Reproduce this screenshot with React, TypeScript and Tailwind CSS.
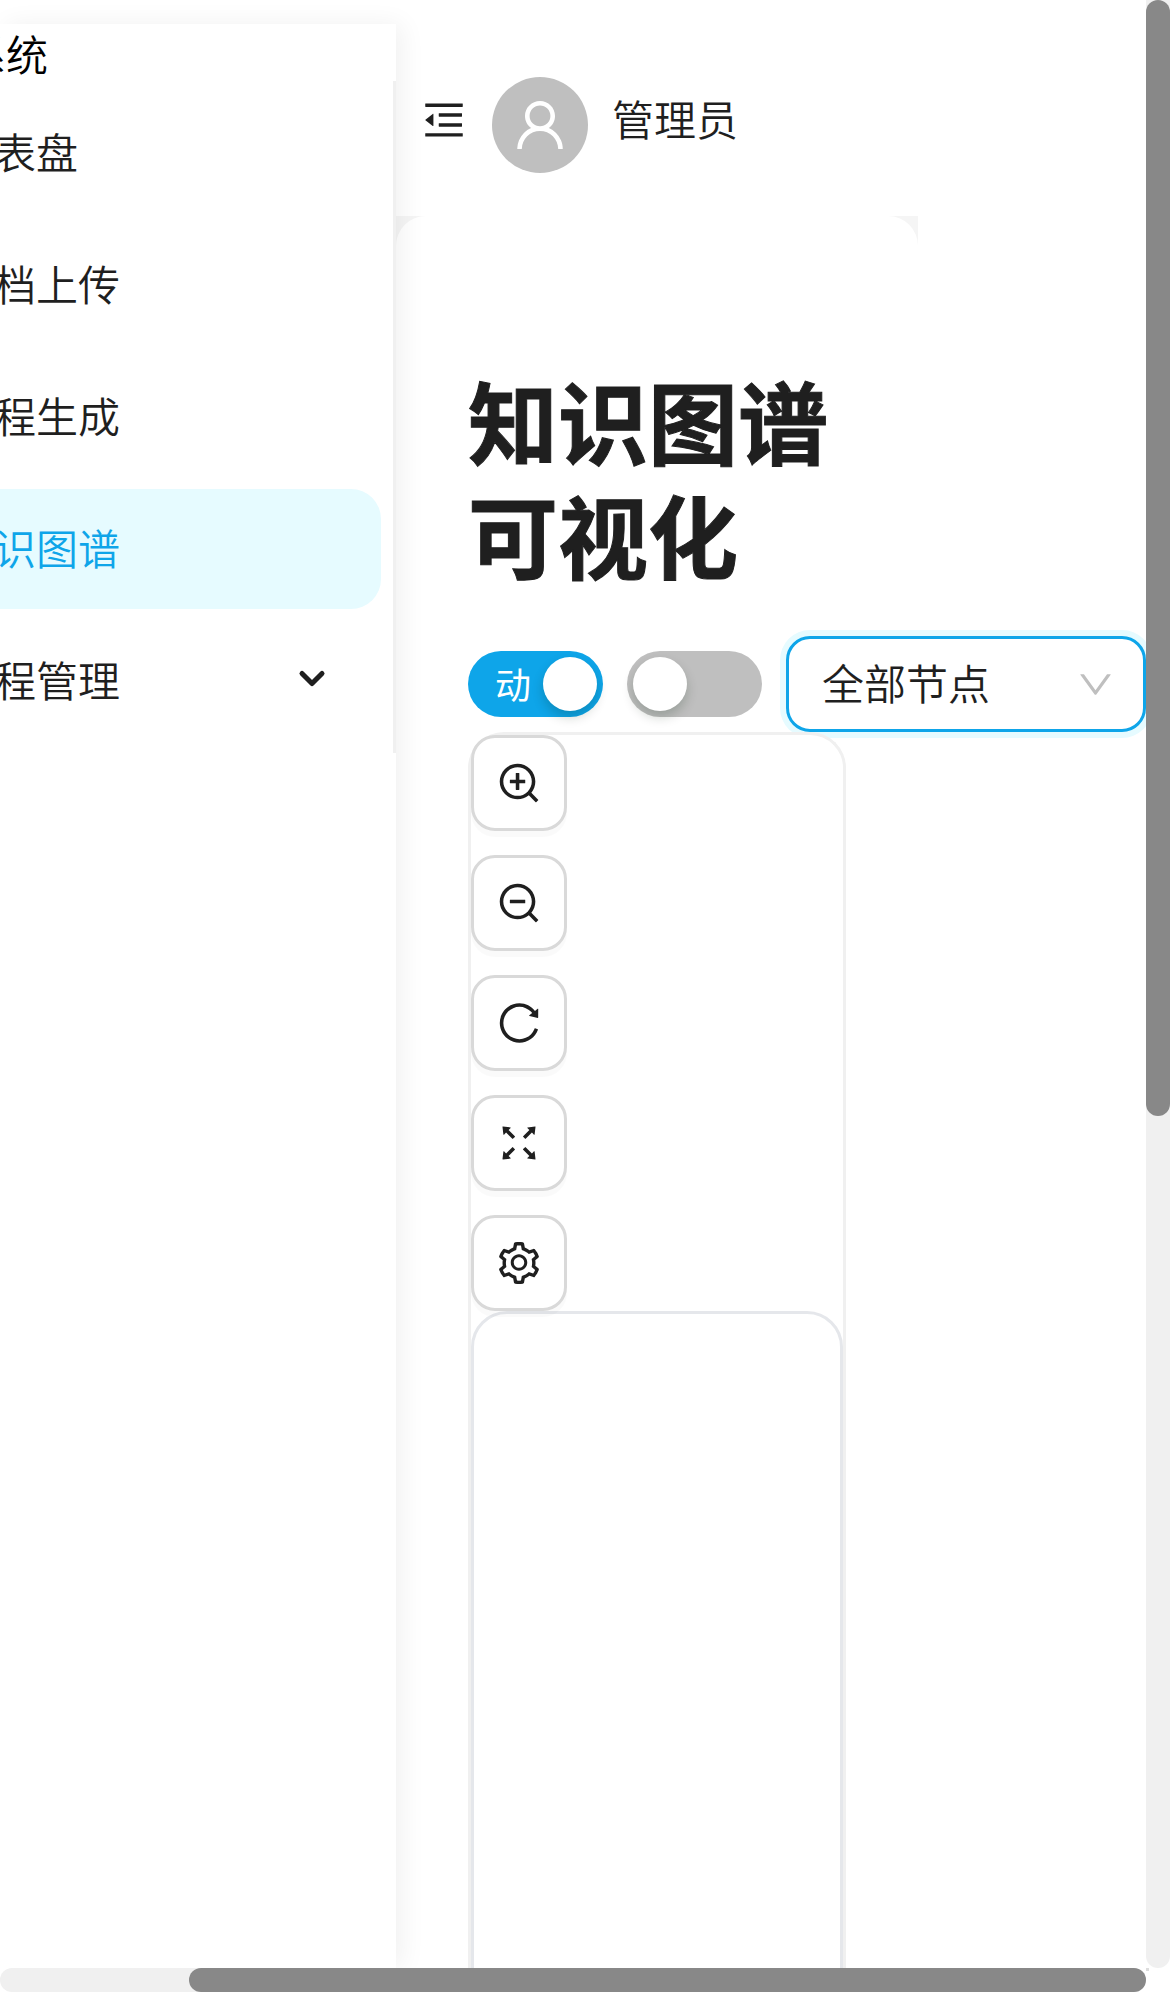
import React from "react";
import {
  AiOutlineMenuFold,
  AiOutlineUser,
  AiOutlineZoomIn,
  AiOutlineZoomOut,
  AiOutlineReload,
  AiOutlineFullscreen,
  AiOutlineSetting,
  AiOutlineDown,
} from "react-icons/ai";

const menu = [
  { label: "仪表盘" },
  { label: "文档上传" },
  { label: "课程生成" },
  { label: "知识图谱", active: true },
  { label: "课程管理", expandable: true },
];

const tools = [
  AiOutlineZoomIn,
  AiOutlineZoomOut,
  AiOutlineReload,
  AiOutlineFullscreen,
  AiOutlineSetting,
];

function Sidebar() {
  return (
    <aside className="relative z-10 mt-6 h-[1944px] w-[396px] shrink-0 bg-white shadow-[6px_0_24px_rgba(0,0,0,0.06)]">
      <div className="h-[57px] overflow-hidden">
        <div className="-ml-9 whitespace-nowrap text-[42px] leading-[58px] text-black">系统</div>
      </div>
      <nav className="flex h-[672px] flex-col gap-3 overflow-hidden border-r-[3px] border-[#f0f0f0] pt-3 pr-3">
        {menu.map((m) => (
          <div
            key={m.label}
            className={
              "flex h-[120px] shrink-0 items-center justify-between rounded-r-[30px] pr-[54px] " +
              (m.active ? "bg-[#e6fbff] text-[#0ea5e9]" : "")
            }
          >
            <span className="-ml-12 pb-[5px] leading-[66px] whitespace-nowrap">{m.label}</span>
            {m.expandable && (
              <svg width="30" height="24" viewBox="0 0 30 24" fill="none" stroke="currentColor" strokeWidth="5" strokeLinecap="round">
                <path d="M5 4.500l10 10M25 4.500l-10 10" />
              </svg>
            )}
          </div>
        ))}
      </nav>
    </aside>
  );
}

function Header() {
  return (
    <header className="flex h-[216px] items-start pl-[24px]">
      <AiOutlineMenuFold className="mt-24 size-12" />
      <div className="mt-[77px] ml-6 flex size-24 items-center justify-center rounded-full bg-[#bfbfbf] text-white">
        <AiOutlineUser className="size-[62px]" />
      </div>
      <span className="mt-[85px] ml-6 leading-[66px]">管理员</span>
    </header>
  );
}

function Toolbar() {
  return (
    <div className="flex h-24 w-[678px] items-center gap-6">
      <div className="flex h-[66px] w-[135px] shrink-0 items-center justify-between rounded-full bg-[#0ea5e9] pr-1.5 pl-[27px]">
        <span className="pb-[2px] text-[36px] leading-[60px] font-normal text-white">动</span>
        <span className="size-[54px] rounded-full bg-white shadow-[0_6px_12px_rgba(0,35,11,0.2)]" />
      </div>
      <div className="flex h-[66px] w-[135px] shrink-0 items-center rounded-full bg-[#bfbfbf] pl-1.5">
        <span className="size-[54px] rounded-full bg-white shadow-[0_6px_12px_rgba(0,35,11,0.2)]" />
      </div>
      <div className="flex h-24 w-[360px] shrink-0 items-center justify-between rounded-3xl border-[3px] border-[#0ea5e9] bg-white pr-[30px] pl-[33px] shadow-[0_0_0_6px_#e6fbff]">
        <span className="pb-1 leading-[66px]">全部节点</span>
        <AiOutlineDown className="-mr-[3px] size-[41px] text-[#bfbfbf]" />
      </div>
    </div>
  );
}

function Graph() {
  return (
    <div className="relative h-[1236px] w-[378px] rounded-t-[36px] border-x-[3px] border-t-[3px] border-[#f0f0f0] bg-white">
      <div className="flex flex-col gap-6">
        {tools.map((Icon, i) => (
          <button
            key={i}
            className="flex size-24 items-center justify-center rounded-3xl border-[3px] border-[#d9d9d9] bg-white shadow-[0_6px_0_rgba(0,0,0,0.02)]"
          >
            <Icon className="size-12" />
          </button>
        ))}
      </div>
      <div className="h-[700px] rounded-t-[36px] border-[3px] border-[#e5e7eb]" />
    </div>
  );
}

export default function App() {
  return (
    <div className="grid h-[1992px] w-[1170px] grid-cols-[1146px_24px] grid-rows-[1968px_24px] overflow-hidden bg-white font-['Noto_Sans_CJK_SC',sans-serif] text-[42px] font-[350] text-[#1f1f1f]">
      <div className="flex overflow-hidden">
        <Sidebar />
        <div className="w-[750px] shrink-0">
          <Header />
          <div className="w-[522px] bg-[#f5f5f5]">
            <main className="h-[1752px] rounded-t-[30px] bg-white pt-[146px] pl-[72px]">
              <h1 className="mb-[46px] w-[378px] text-[90px] leading-[114px] font-bold [-webkit-text-stroke:1px_#1f1f1f]">知识图谱可视化</h1>
              <Toolbar />
              <Graph />
            </main>
          </div>
        </div>
      </div>
      <div className="overflow-hidden rounded-b-full bg-[#f0f0f0]">
        <div className="h-[1116px] rounded-full bg-[#888]" />
      </div>
      <div className="rounded-full bg-[#f0f0f0] pl-[189px]">
        <div className="h-6 rounded-full bg-[#888]" />
      </div>
      <div className="size-[3px] bg-[#dcdcdc]" />
    </div>
  );
}
